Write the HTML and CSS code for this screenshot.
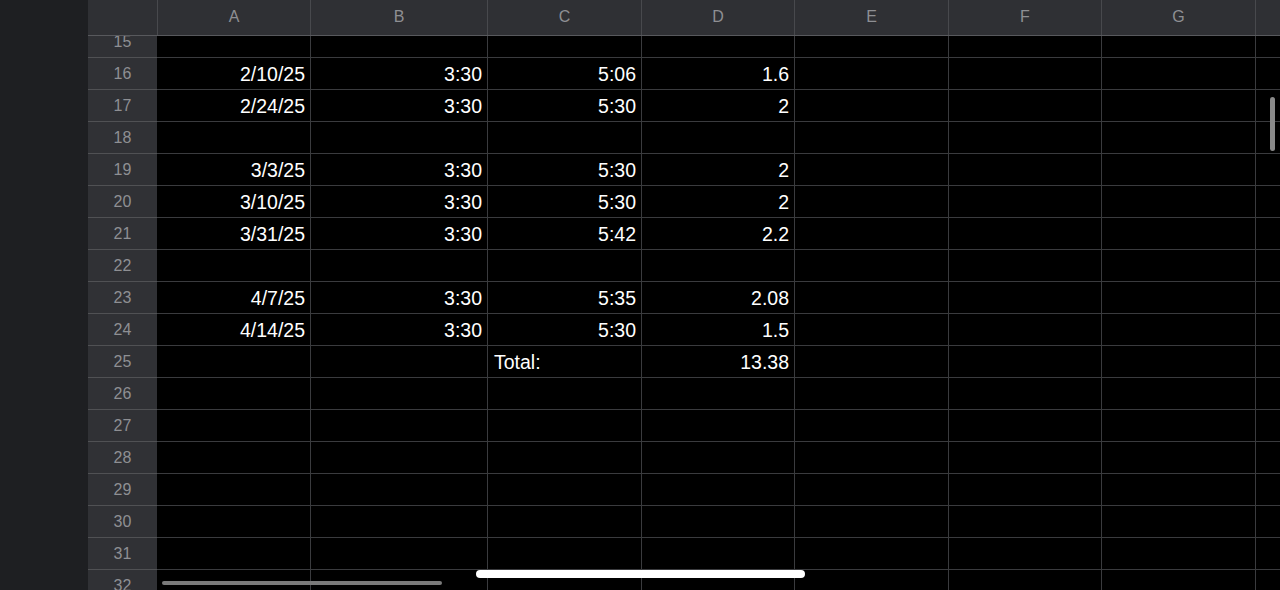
FILE: index.html
```html
<!DOCTYPE html>
<html lang="en">
<head>
  <meta charset="UTF-8" />
  <meta name="viewport" content="width=device-width, initial-scale=1.0"/>
  <title>Hours Sheet</title>
  <link rel="stylesheet" href="styles.css">
</head>
<body>

  <div class="side"></div>

  <div class="sheet">
    <div class="row head" id="colHead"></div>
    <div class="body">
      <div class="rows" id="rows"></div>
    </div>
  </div>

  <div class="vscroll"></div>
  <div class="hscroll"></div>
  <div class="home-bar"></div>

  <script>
    const cols = ['A', 'B', 'C', 'D', 'E', 'F', 'G', ''];

    // row number -> cells A..D
    const data = {
      16: ['2/10/25', '3:30', '5:06', '1.6'],
      17: ['2/24/25', '3:30', '5:30', '2'],
      19: ['3/3/25', '3:30', '5:30', '2'],
      20: ['3/10/25', '3:30', '5:30', '2'],
      21: ['3/31/25', '3:30', '5:42', '2.2'],
      23: ['4/7/25', '3:30', '5:35', '2.08'],
      24: ['4/14/25', '3:30', '5:30', '1.5'],
      25: ['', '', 'Total:', '13.38'],
    };

    document.getElementById('colHead').innerHTML =
      '<div class="corner"></div>' + cols.map(c => `<div class="col-label">${c}</div>`).join('');

    let html = '';
    for (let n = 15; n <= 32; n++) {
      const vals = data[n] || [];
      html += `<div class="row"><div class="num">${n}</div>`;
      cols.forEach((c, i) => {
        const v = vals[i] || '';
        const isText = v && isNaN(parseFloat(v));
        html += `<div class="cell${isText ? ' text' : ''}">${v}</div>`;
      });
      html += '</div>';
    }
    document.getElementById('rows').innerHTML = html;
  </script>

</body>
</html>
```

FILE: styles.css
```css
html, body {
  margin: 0;
  height: 100%;
}
body {
  display: flex;
  background-color: #000;
  font-family: 'Liberation Sans', Arial, sans-serif;
  overflow: hidden;
  position: relative;
}
.side {
  width: 88px;
  flex-shrink: 0;
  background-color: #1e1f22;
}
.sheet {
  flex: 1;
  display: flex;
  flex-direction: column;
  min-width: 0;
}
.row {
  display: grid;
  grid-template-columns: 69px 153px 177px 154px 153px 154px 153px 154px 1fr;
  height: 32px;
  box-sizing: border-box;
}
.head {
  height: 36px;
  background-color: #2f3034;
  border-bottom: 1px solid #58595d;
}
.corner {
  background-color: #2f3034;
}
.col-label {
  display: flex;
  align-items: center;
  justify-content: center;
  color: #8e8f93;
  font-size: 16px;
  border-left: 1px solid #48494d;
  padding-bottom: 2px;
}
.body {
  flex: 1;
  overflow: hidden;
}
.rows {
  margin-top: -10px;
}
.rows .row {
  border-bottom: 1px solid #3a3b3e;
}
.num {
  display: flex;
  align-items: center;
  justify-content: center;
  background-color: #303135;
  color: #8e8f93;
  font-size: 16px;
  box-shadow: 0 1px 0 #505154;
}
.cell {
  display: flex;
  align-items: center;
  justify-content: flex-end;
  padding: 2px 5px 0 6px;
  color: #fff;
  font-size: 19.5px;
  border-left: 1px solid #3a3b3e;
  white-space: nowrap;
}
.num + .cell {
  border-left: none;
}
.cell.text {
  justify-content: flex-start;
}
.vscroll {
  position: absolute;
  left: 1270px;
  top: 97px;
  width: 5px;
  height: 54px;
  border-radius: 3px;
  background-color: #8a8a8a;
}
.hscroll {
  position: absolute;
  left: 162px;
  top: 581px;
  width: 280px;
  height: 4px;
  border-radius: 2px;
  background-color: #7a7a7a;
}
.home-bar {
  position: absolute;
  left: 476px;
  top: 570px;
  width: 329px;
  height: 8px;
  border-radius: 4px;
  background-color: #fff;
}
```
